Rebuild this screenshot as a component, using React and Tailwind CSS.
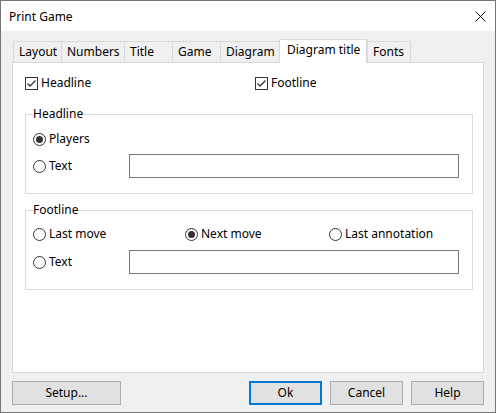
import { useState } from "react"

const font = { fontFamily: '"Noto Sans", "Liberation Sans", sans-serif' }

const tabs = [
  { label: "Layout", w: "w-[48px]" },
  { label: "Numbers", w: "w-[63px]" },
  { label: "Title", w: "w-[48px]" },
  { label: "Game", w: "w-[48px]" },
  { label: "Diagram", w: "w-[59px]" },
  { label: "Diagram title", w: "w-[88px]", active: true },
  { label: "Fonts", w: "w-[44px]", last: true },
]

const Check = ({ checked, label, onClick }) => (
  <button type="button" onClick={onClick} className="flex items-center gap-[3px] text-[12px] text-black">
    <svg width="13" height="13" viewBox="0 0 13 13">
      <rect x="0.5" y="0.5" width="12" height="12" fill="#fff" stroke="#333" />
      {checked && <polyline points="2.5,6.5 5,9 10.5,3.5" fill="none" stroke="#333" strokeWidth="1.3" />}
    </svg>
    <span>{label}</span>
  </button>
)

const Radio = ({ checked, label, onClick }) => (
  <button type="button" onClick={onClick} className="flex items-center gap-[3px] text-[12px] text-black">
    <svg width="13" height="13" viewBox="0 0 13 13">
      <circle cx="6.5" cy="6.5" r="6" fill="#fff" stroke="#333" />
      {checked && <circle cx="6.5" cy="6.5" r="3.5" fill="#333" />}
    </svg>
    <span>{label}</span>
  </button>
)

const TextBox = () => (
  <input className="w-[330px] h-[24px] border border-[#7a7a7a] bg-white outline-none px-1 text-[12px]" />
)

const Btn = ({ children, w, primary }) => (
  <button
    type="button"
    className={`${w} h-[24px] bg-[#e1e1e1] text-[12px] text-black ${primary ? "border-2 border-[#0078d7]" : "border border-[#adadad]"}`}
  >
    {children}
  </button>
)

export default function App() {
  const [headOn, setHeadOn] = useState(true)
  const [footOn, setFootOn] = useState(true)
  const [head, setHead] = useState("players")
  const [foot, setFoot] = useState("next")

  return (
    <div style={font} className="w-[496px] h-[413px] border border-[#767676] flex flex-col bg-[#f0f0f0] text-black">
      <div className="h-[30px] bg-white flex items-center justify-between pl-[8px] pr-[9px] pt-[1px] text-[12px]">
        <span>Print Game</span>
        <svg width="11" height="11" viewBox="0 0 11 11">
          <path d="M0.5 0.5 L10.5 10.5 M10.5 0.5 L0.5 10.5" stroke="#111" strokeWidth="1" />
        </svg>
      </div>

      <div className="flex-1 flex flex-col px-[11px]">
        <div className="mt-[8px] h-[23px] flex items-end pl-[1px]">
          {tabs.map((t) =>
            t.active ? (
              <div
                key={t.label}
                className={`${t.w} h-[24px] -mb-px relative z-10 bg-white border-t border-l border-r border-[#d9d9d9] pl-[7px] pt-[2px] text-[12px] leading-[16px]`}
              >
                {t.label}
              </div>
            ) : (
              <div
                key={t.label}
                className={`${t.w} h-[21px] bg-[#f0f0f0] border-t border-l ${t.last ? "border-r" : ""} border-[#d9d9d9] pl-[5px] pt-[2px] text-[12px] leading-[16px]`}
              >
                {t.label}
              </div>
            )
          )}
        </div>

        <div className="h-[311px] bg-white border border-[#d9d9d9] flex flex-col pl-[12px] pr-[10px] pt-[10px]">
          <div className="h-[20px] flex items-center">
            <div className="w-[230px]">
              <Check checked={headOn} label="Headline" onClick={() => setHeadOn(!headOn)} />
            </div>
            <Check checked={footOn} label="Footline" onClick={() => setFootOn(!footOn)} />
          </div>

          <fieldset className="mt-[13px] border border-[#dcdcdc] pl-[7px] pt-[7px] pb-[15px] flex flex-col gap-[5px]">
            <legend className="text-[12px] leading-[16px]">Headline</legend>
            <div className="h-[20px] flex items-center">
              <Radio checked={head === "players"} label="Players" onClick={() => setHead("players")} />
            </div>
            <div className="h-[24px] flex items-center">
              <div className="w-[96px]">
                <Radio checked={head === "text"} label="Text" onClick={() => setHead("text")} />
              </div>
              <TextBox />
            </div>
          </fieldset>

          <fieldset className="mt-[8px] border border-[#dcdcdc] pl-[7px] pt-[6px] pb-[15px] flex flex-col gap-[6px]">
            <legend className="text-[12px] leading-[16px]">Footline</legend>
            <div className="h-[20px] flex items-center">
              <div className="w-[152px]">
                <Radio checked={foot === "last"} label="Last move" onClick={() => setFoot("last")} />
              </div>
              <div className="w-[144px]">
                <Radio checked={foot === "next"} label="Next move" onClick={() => setFoot("next")} />
              </div>
              <Radio checked={foot === "annot"} label="Last annotation" onClick={() => setFoot("annot")} />
            </div>
            <div className="h-[24px] flex items-center">
              <div className="w-[96px]">
                <Radio checked={foot === "text"} label="Text" onClick={() => setFoot("text")} />
              </div>
              <TextBox />
            </div>
          </fieldset>
        </div>

        <div className="mt-[8px] flex items-center justify-between">
          <Btn w="w-[109px]">Setup...</Btn>
          <div className="flex gap-[8px]">
            <Btn w="w-[73px]" primary>Ok</Btn>
            <Btn w="w-[73px]">Cancel</Btn>
            <Btn w="w-[73px]">Help</Btn>
          </div>
        </div>
      </div>
    </div>
  )
}
